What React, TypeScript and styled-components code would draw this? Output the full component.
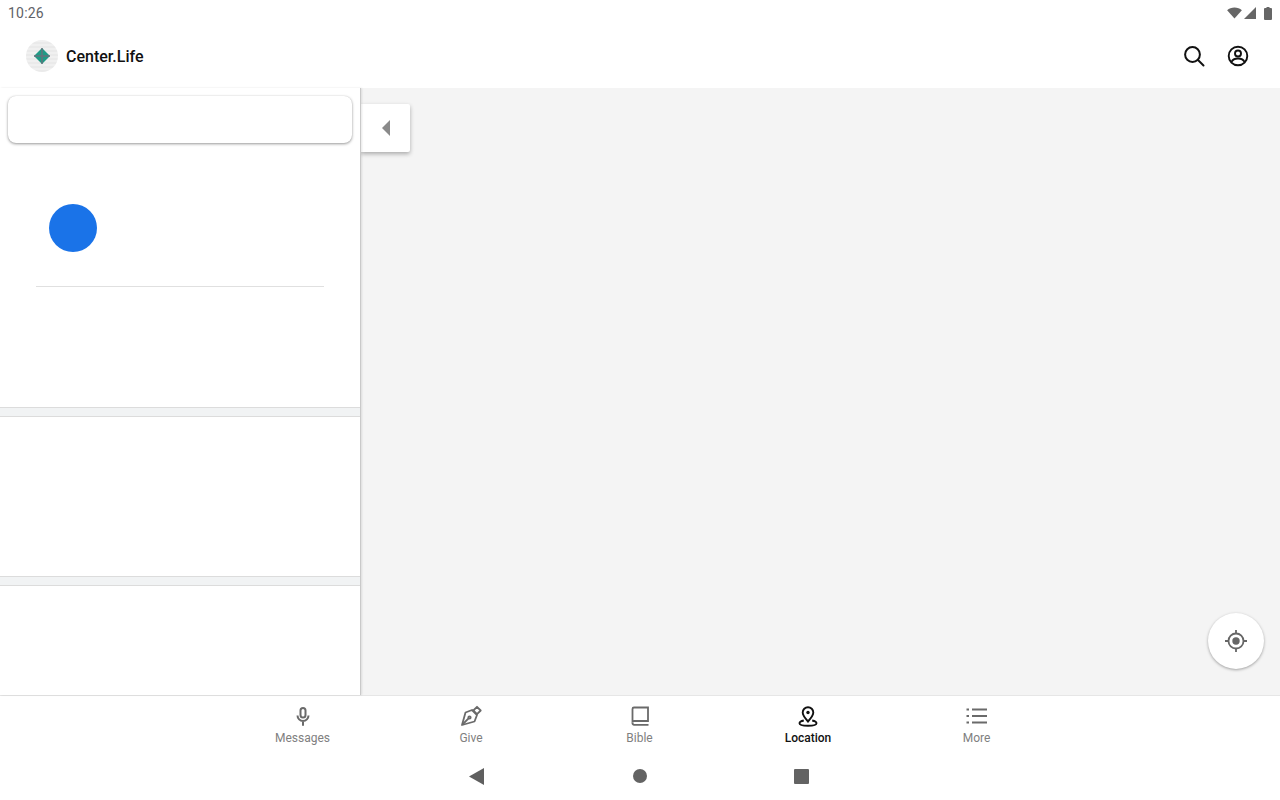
import React from "react";
import styled, { createGlobalStyle } from "styled-components";

const Global = createGlobalStyle`
  html, body {
    margin: 0;
    padding: 0;
    background: #fff;
    overflow: hidden;
  }
  * {
    box-sizing: border-box;
  }
`;

const Screen = styled.div`
  width: 1280px;
  height: 800px;
  display: flex;
  flex-direction: column;
  font-family: Roboto, "Liberation Sans", sans-serif;
`;

const StatusBar = styled.div`
  height: 26px;
  flex: none;
  display: flex;
  align-items: center;
  justify-content: space-between;
  padding: 0 8px;
  color: #5f6368;
  font-size: 14px;
  letter-spacing: 0.2px;
`;

const StatusIcons = styled.div`
  display: flex;
  align-items: center;
  gap: 2px;
  color: #666;
`;

const BatterySlot = styled.div`
  display: flex;
  margin-left: 6px;
`;

const AppBar = styled.div`
  height: 62px;
  flex: none;
  display: flex;
  align-items: center;
  justify-content: space-between;
  padding: 0 31px 2px 26px;
`;

const Brand = styled.div`
  display: flex;
  align-items: center;
  gap: 8px;
`;

const LogoBadge = styled.div`
  width: 32px;
  height: 32px;
  border-radius: 50%;
  background: repeating-linear-gradient(0deg, #eaeaea 0 2px, #f0f0f0 2px 4px);
  display: flex;
  align-items: center;
  justify-content: center;
`;

const BrandName = styled.div`
  font-size: 16px;
  font-weight: 500;
  color: #111;
`;

const Actions = styled.div`
  display: flex;
  align-items: center;
  gap: 22px;
  color: #111;
`;

const Body = styled.div`
  flex: 1;
  display: flex;
  min-height: 0;
`;

const Sidebar = styled.div`
  position: relative;
  z-index: 1;
  width: 361px;
  flex: none;
  display: flex;
  flex-direction: column;
  border-right: 1px solid #c9c9c9;
  background: #fff;
  box-shadow: 1px 0 2px rgba(0, 0, 0, 0.1);
`;

const SearchCard = styled.div`
  height: 48px;
  margin: 8px 8px 0;
  background: #fff;
  border-radius: 8px;
  box-shadow: 0 1px 3px rgba(0, 0, 0, 0.4), 0 0 1px rgba(0, 0, 0, 0.14);
`;

const LocationBlock = styled.div`
  height: 264px;
  flex: none;
  padding: 60px 36px 0;
`;

const Avatar = styled.div`
  width: 48px;
  height: 48px;
  margin: 1px 0 0 13px;
  border-radius: 50%;
  background: #1a73e8;
`;

const Rule = styled.div`
  height: 1px;
  margin-top: 34px;
  background: #e0e0e0;
`;

const SectionGap = styled.div`
  height: 10px;
  flex: none;
  background: #f1f3f4;
  border-top: 1px solid #dcdcdc;
  border-bottom: 1px solid #dcdcdc;
`;

const EmptySection = styled.div<{ $height: number }>`
  height: ${(p) => p.$height}px;
  flex: none;
`;

const MapArea = styled.div`
  flex: 1;
  position: relative;
  background: #f4f4f4;
`;

const CollapseButton = styled.div`
  position: absolute;
  left: 0;
  top: 16px;
  width: 49px;
  height: 48px;
  background: #fff;
  border-radius: 0 2px 2px 0;
  box-shadow: 0 2px 4px rgba(0, 0, 0, 0.3);
  display: flex;
  align-items: center;
  justify-content: center;
  color: #8a8a8a;
`;

const LocateButton = styled.div`
  position: absolute;
  right: 16px;
  bottom: 26px;
  width: 56px;
  height: 56px;
  border-radius: 50%;
  background: #fff;
  box-shadow: 0 1px 3px rgba(0, 0, 0, 0.35);
  display: flex;
  align-items: center;
  justify-content: center;
  color: #666;
`;

const TabBar = styled.div`
  height: 57px;
  flex: none;
  display: flex;
  justify-content: center;
  padding-right: 1px;
  background: #fff;
  border-top: 1px solid #e6e6e6;
`;

const Tab = styled.div<{ $active?: boolean }>`
  width: 168.5px;
  display: flex;
  flex-direction: column;
  align-items: center;
  padding-top: 8px;
  color: ${(p) => (p.$active ? "#111" : "#6a6a6a")};
`;

const TabIcon = styled.div`
  height: 24px;
  display: flex;
  align-items: center;
  justify-content: center;
`;

const TabLabel = styled.div<{ $active?: boolean }>`
  margin-top: 3px;
  font-size: 12px;
  line-height: 14px;
  font-weight: ${(p) => (p.$active ? 500 : 400)};
  color: ${(p) => (p.$active ? "#111" : "#808080")};
`;

const NavBar = styled.div`
  height: 48px;
  flex: none;
  display: flex;
  align-items: center;
  color: #5f5f5f;
  padding-left: 468px;
`;

const NavSlot = styled.div<{ $width: number }>`
  width: ${(p) => p.$width}px;
  flex: none;
  display: flex;
`;

const Circle = styled.div`
  width: 14px;
  height: 14px;
  border-radius: 50%;
  background: #636363;
`;

const Square = styled.div`
  width: 15px;
  height: 15px;
  border-radius: 1px;
  background: #636363;
`;

const tabs = [
  {
    label: "Messages",
    icon: (
      <svg width="24" height="24" viewBox="0 0 24 24" fill="none" stroke="currentColor" strokeWidth="2">
        <rect x="9.500" y="4" width="5" height="9.500" rx="2.500" />
        <path d="M6.500 11.500a5.500 5.500 0 0 0 11 0M12 17v4.700" />
      </svg>
    ),
  },
  {
    label: "Give",
    icon: (
      <svg width="24" height="24" viewBox="0 0 24 24" fill="none" stroke="currentColor" strokeWidth="1.800" strokeLinejoin="round">
        <path d="M3 21 6.500 8.500 13 6l5 5-2.500 6.500z" />
        <path d="M3.500 20.500 9.800 14.200" />
        <circle cx="10.500" cy="13.500" r="1.200" />
        <path d="M18 2.800 21.700 6.500 18 10.200 14.300 6.500z" />
      </svg>
    ),
  },
  {
    label: "Bible",
    icon: (
      <svg width="24" height="24" viewBox="0 0 24 24" fill="none" stroke="currentColor" strokeWidth="1.800">
        <path d="M20 3.500H6a1.500 1.500 0 0 0-1.500 1.500v13.500A1.500 1.500 0 0 1 6 17h14z" />
        <path d="M4.500 18.500A2 2 0 0 0 6 20.800h14.500" />
      </svg>
    ),
  },
  {
    label: "Location",
    active: true,
    icon: (
      <svg width="24" height="24" viewBox="0 0 24 24" fill="none" stroke="currentColor" strokeWidth="1.900">
        <path d="M12 17.500c-3.200-3.600-5.300-6.200-5.300-9a5.300 5.300 0 0 1 10.600 0c0 2.800-2.100 5.400-5.300 9z" />
        <circle cx="12" cy="8.500" r="1.700" fill="currentColor" stroke="none" />
        <path d="M7.800 16.500C5.300 17 3.500 18 3.500 19.300c0 1.500 3.500 2.500 8.500 2.500s8.500-1 8.500-2.500c0-1.300-1.800-2.300-4.300-2.800" />
      </svg>
    ),
  },
  {
    label: "More",
    icon: (
      <svg width="24" height="24" viewBox="0 0 24 24" fill="none" stroke="currentColor" strokeWidth="1.800">
        <path d="M7 5.500h15M7 12h15M7 18.500h15" />
        <path d="M1.500 5.500h2.500M1.500 12h2.500M1.500 18.500h2.500" />
      </svg>
    ),
  },
];

export default function App() {
  return (
    <Screen>
      <Global />
      <StatusBar>
        <div>10:26</div>
        <StatusIcons>
          <svg width="15" height="12" viewBox="0 0 16 13" fill="currentColor">
            <path d="M0 3.500C2 1.500 5 .5 8 .5s6 1 8 3L8 12.500z" />
          </svg>
          <svg width="12" height="12" viewBox="0 0 12 12" fill="currentColor">
            <path d="M12 0v12H0z" />
          </svg>
          <BatterySlot>
            <svg width="8" height="13" viewBox="0 0 8 13" fill="currentColor">
              <path d="M2.500 0h3v1H7a1 1 0 0 1 1 1v10a1 1 0 0 1-1 1H1a1 1 0 0 1-1-1V2a1 1 0 0 1 1-1h1.500z" />
            </svg>
          </BatterySlot>
        </StatusIcons>
      </StatusBar>
      <AppBar>
        <Brand>
          <LogoBadge>
            <svg width="18" height="18" viewBox="0 0 18 18">
              <path d="M9 1 17 9 9 17 1 9z" fill="#1f9a85" />
              <path d="M8.300 1h1.400v7.300H17v1.400H9.700V17H8.300V9.700H1V8.300h7.300z" fill="#66727c" />
            </svg>
          </LogoBadge>
          <BrandName>Center.Life</BrandName>
        </Brand>
        <Actions>
          <svg width="22" height="22" viewBox="0 0 22 22" fill="none" stroke="currentColor" strokeWidth="2">
            <circle cx="9.500" cy="9.500" r="7.400" />
            <path d="m15 15 5.500 5.500" strokeLinecap="round" />
          </svg>
          <svg width="22" height="22" viewBox="0 0 22 22" fill="none" stroke="currentColor" strokeWidth="1.900">
            <circle cx="11" cy="11" r="9.300" />
            <circle cx="11" cy="8.500" r="3" />
            <path d="M4.500 17c1-2.500 3.500-3.500 6.500-3.500s5.500 1 6.500 3.500" />
          </svg>
        </Actions>
      </AppBar>
      <Body>
        <Sidebar>
          <SearchCard />
          <LocationBlock>
            <Avatar />
            <Rule />
          </LocationBlock>
          <SectionGap />
          <EmptySection $height={159} />
          <SectionGap />
          <EmptySection $height={109} />
        </Sidebar>
        <MapArea>
          <CollapseButton>
            <svg width="10" height="16" viewBox="0 0 10 16" fill="currentColor">
              <path d="M9 0v16L1 8z" />
            </svg>
          </CollapseButton>
          <LocateButton>
            <svg width="22" height="22" viewBox="0 0 22 22" fill="none" stroke="currentColor" strokeWidth="1.800">
              <circle cx="11" cy="11" r="7.500" />
              <circle cx="11" cy="11" r="3.700" fill="currentColor" stroke="none" />
              <path d="M11 0v3.500M11 18.500V22M0 11h3.500M18.500 11H22" />
            </svg>
          </LocateButton>
        </MapArea>
      </Body>
      <TabBar>
        {tabs.map((tab) => (
          <Tab key={tab.label} $active={tab.active}>
            <TabIcon>{tab.icon}</TabIcon>
            <TabLabel $active={tab.active}>{tab.label}</TabLabel>
          </Tab>
        ))}
      </TabBar>
      <NavBar>
        <NavSlot $width={165}>
          <svg width="16" height="17" viewBox="0 0 16 17" fill="currentColor">
            <path d="M16 0v17L1 8.500z" />
          </svg>
        </NavSlot>
        <NavSlot $width={161}>
          <Circle />
        </NavSlot>
        <NavSlot $width={20}>
          <Square />
        </NavSlot>
      </NavBar>
    </Screen>
  );
}
